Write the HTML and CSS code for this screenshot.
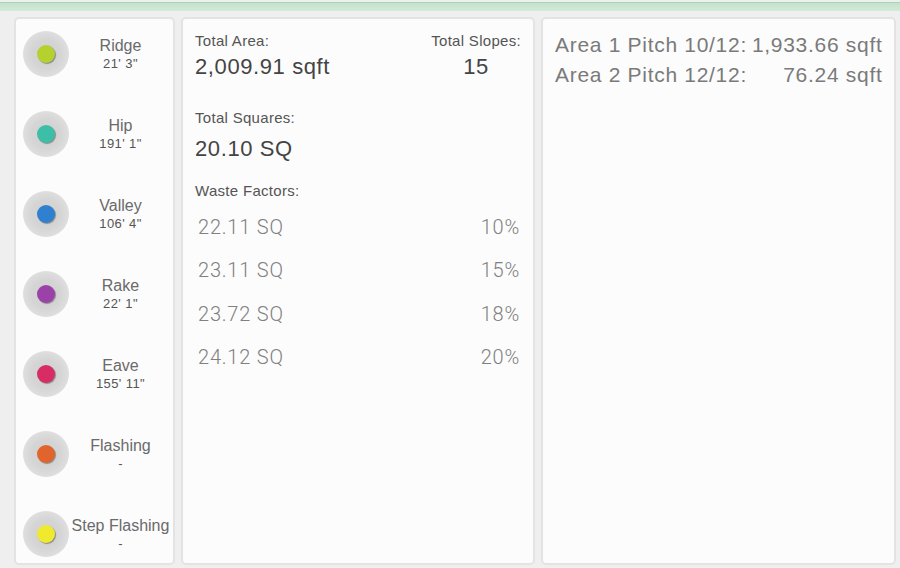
FILE: index.html
```html
<!DOCTYPE html>
<html>
<head>
<meta charset="utf-8">
<link rel="stylesheet" href="styles.css">
</head>
<body>
<div class="topbar"></div>
<div class="main">
  <div class="panel lines">
    <div class="line"><span class="dot-wrap"><span class="dot ridge"></span></span><div class="info"><div class="name">Ridge</div><div class="len">21' 3"</div></div></div>
    <div class="line"><span class="dot-wrap"><span class="dot hip"></span></span><div class="info"><div class="name">Hip</div><div class="len">191' 1"</div></div></div>
    <div class="line"><span class="dot-wrap"><span class="dot valley"></span></span><div class="info"><div class="name">Valley</div><div class="len">106' 4"</div></div></div>
    <div class="line"><span class="dot-wrap"><span class="dot rake"></span></span><div class="info"><div class="name">Rake</div><div class="len">22' 1"</div></div></div>
    <div class="line"><span class="dot-wrap"><span class="dot eave"></span></span><div class="info"><div class="name">Eave</div><div class="len">155' 11"</div></div></div>
    <div class="line"><span class="dot-wrap"><span class="dot flashing"></span></span><div class="info"><div class="name">Flashing</div><div class="len">-</div></div></div>
    <div class="line"><span class="dot-wrap"><span class="dot step"></span></span><div class="info"><div class="name">Step Flashing</div><div class="len">-</div></div></div>
  </div>
  <div class="panel totals">
    <div class="head">
      <div class="block">
        <div class="label">Total Area:</div>
        <div class="big">2,009.91 sqft</div>
      </div>
      <div class="block center">
        <div class="label">Total Slopes:</div>
        <div class="big">15</div>
      </div>
    </div>
    <div class="label sq-label">Total Squares:</div>
    <div class="big sq-val">20.10 SQ</div>
    <div class="label waste-label">Waste Factors:</div>
    <div class="waste">
      <div class="wrow"><span>22.11 SQ</span><span>10%</span></div>
      <div class="wrow"><span>23.11 SQ</span><span>15%</span></div>
      <div class="wrow"><span>23.72 SQ</span><span>18%</span></div>
      <div class="wrow"><span>24.12 SQ</span><span>20%</span></div>
    </div>
  </div>
  <div class="panel pitches">
    <div class="pgrid">
      <span>Area 1 Pitch 10/12:</span><span class="pv">1,933.66 sqft</span>
      <span>Area 2 Pitch 12/12:</span><span class="pv">76.24 sqft</span>
    </div>
  </div>
</div>
</body>
</html>
```

FILE: styles.css
```css
html, body {
  margin: 0;
  padding: 0;
}
body {
  width: 900px;
  height: 568px;
  overflow: hidden;
  background: #efefef;
  font-family: "Liberation Sans", Arial, sans-serif;
}
.topbar {
  margin-top: 2px;
  height: 8px;
  border-top: 1px solid #a9d4b5;
  background: linear-gradient(#c4e2cc, #d3ebd8);
}
.main {
  display: flex;
  padding: 6px 2px 0 14px;
  gap: 6px;
  height: 548px;
}
.panel {
  box-sizing: border-box;
  height: 548px;
  background: #fcfcfc;
  border: 2px solid #e3e3e3;
  border-radius: 5px;
}
.lines {
  width: 161px;
  padding: 12px 0 0 7px;
  display: flex;
  flex-direction: column;
  gap: 34px;
}
.line {
  display: flex;
  align-items: center;
  height: 46px;
}
.dot-wrap {
  width: 46px;
  height: 46px;
  flex: none;
  border-radius: 50%;
  background: radial-gradient(circle, #d0d0d0 0%, #d5d5d5 45%, #e2e2e2 80%, #eeeeee 100%);
  display: flex;
  align-items: center;
  justify-content: center;
}
.dot {
  width: 18px;
  height: 18px;
  border-radius: 50%;
  box-shadow: 1px 1px 1px rgba(0,0,0,0.35);
}
.ridge { background: #b4d130; }
.hip { background: #3dbfa7; }
.valley { background: #2f80d0; }
.rake { background: #9a42a8; }
.eave { background: #d82c65; }
.flashing { background: #e0642c; }
.step { background: #f0ea2e; }
.info {
  flex: 1;
  text-align: center;
  padding: 2px 1px 0 0;
}
.name {
  font-size: 16px;
  line-height: 18px;
  color: #6a6a6a;
}
.len {
  font-size: 13px;
  line-height: 18px;
  color: #555;
  letter-spacing: 0.4px;
}
.totals {
  width: 354px;
  padding: 13px 12px 0 12px;
}
.head {
  display: flex;
  justify-content: space-between;
}
.center { text-align: center; }
.label {
  font-size: 15px;
  line-height: 18px;
  color: #555;
  letter-spacing: 0.3px;
}
.big {
  font-size: 22px;
  line-height: 24px;
  color: #444;
  letter-spacing: 0.6px;
  margin-top: 5px;
}
.sq-label { margin-top: 30px; }
.sq-val { margin-top: 10px; }
.waste-label { margin-top: 21px; }
.waste {
  margin-top: 6px;
  padding: 0 1px 0 3px;
}
.wrow {
  display: flex;
  justify-content: space-between;
  height: 43.3px;
  line-height: 43px;
  font-family: Roboto, "Liberation Sans", sans-serif;
  font-weight: 300;
  font-size: 20px;
  color: #808080;
  letter-spacing: 0.8px;
}
.pitches {
  width: 355px;
  padding: 11px 12px 0 12px;
}
.pgrid {
  display: grid;
  grid-template-columns: max-content max-content;
  column-gap: 5px;
  font-size: 21px;
  line-height: 30px;
  color: #7a7a7a;
  letter-spacing: 0.7px;
}
.pv { text-align: right; }
```
